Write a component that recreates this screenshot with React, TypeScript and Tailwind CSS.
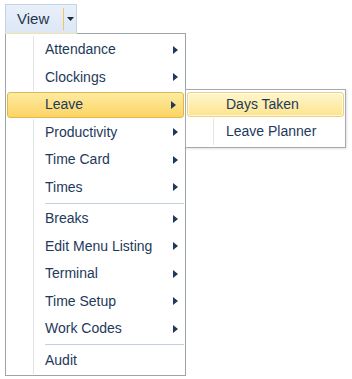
import React from 'react'

type Item = { label: string; sub?: boolean; active?: boolean; sepBefore?: boolean }

const items: Item[] = [
  { label: 'Attendance', sub: true },
  { label: 'Clockings', sub: true },
  { label: 'Leave', sub: true, active: true },
  { label: 'Productivity', sub: true },
  { label: 'Time Card', sub: true },
  { label: 'Times', sub: true },
  { label: 'Breaks', sub: true, sepBefore: true },
  { label: 'Edit Menu Listing', sub: true },
  { label: 'Terminal', sub: true },
  { label: 'Time Setup', sub: true },
  { label: 'Work Codes', sub: true },
  { label: 'Audit', sepBefore: true },
]

const Arrow = () => (
  <svg width="5" height="8" viewBox="0 0 5 8" className="shrink-0 mr-[7px]">
    <polygon points="0,0 5,4 0,8" fill="#1e395b" />
  </svg>
)

const Separator = () => (
  <div className="flex h-[4px]">
    <div className="w-[28px] shrink-0 border-r border-[#e2e3e5]" />
    <div className="flex-1 flex items-center pl-[11px] pr-[1px]">
      <div className="h-px w-full bg-[#c5d0de]" />
    </div>
  </div>
)

const MenuRow = ({ item }: { item: Item }) =>
  item.active ? (
    <div className="flex items-center h-[25.5px] m-[1px] rounded-[3px] border border-[#e0b84e] bg-linear-to-b from-[#feeba0] to-[#fcd462]">
      <div className="w-[26px] shrink-0" />
      <div className="flex-1 pl-[11px]">{item.label}</div>
      {item.sub && <Arrow />}
    </div>
  ) : (
    <div className="flex items-stretch h-[27.5px]">
      <div className="w-[28px] shrink-0 border-r border-[#e2e3e5]" />
      <div className="flex-1 flex items-center pl-[11px]">{item.label}</div>
      {item.sub && (
        <div className="flex items-center">
          <Arrow />
        </div>
      )}
    </div>
  )

const SubMenu = () => (
  <div className="absolute left-[185px] top-[89px] w-[161px] flex flex-col border border-[#a7abb0] bg-white shadow-[1px_1px_2px_rgba(0,0,0,0.12)] pt-[1px] pb-[2px]">
    <div className="flex items-center h-[25px] m-[1px] rounded-[3px] border border-[#ecd27c] bg-linear-to-b from-[#fef6cc] to-[#fde48c] shadow-[inset_0_0_0_1px_rgba(255,255,255,0.7)]">
      <div className="w-[26px] shrink-0" />
      <div className="pl-[12px]">Days Taken</div>
    </div>
    <div className="flex h-[27px]">
      <div className="w-[28px] shrink-0 border-r border-[#e3e4e6]" />
      <div className="flex items-center pl-[12px]">Leave Planner</div>
    </div>
  </div>
)

export default function App() {
  return (
    <div
      className="relative w-[352px] h-[379px] bg-white text-[14px] text-[#1e395b]"
      style={{ fontFamily: '"Liberation Sans", Arial, sans-serif' }}
    >
      <div className="pt-[4px] pl-[5px]">
        <div className="flex w-[72px] h-[29px] border border-b-0 border-[#c4d4e8] bg-linear-to-b from-[#e9f0fa] to-[#dce7f5]">
          <div className="w-[57px] flex items-center pl-[11px] pt-px text-[15px] text-[#26364e]">View</div>
          <div className="w-px my-[3px] bg-[#f2c65a]" />
          <div className="flex-1 flex items-center justify-center">
            <svg width="7" height="4" viewBox="0 0 7 4">
              <polygon points="0,0 7,0 3.5,4" fill="#1b2b40" />
            </svg>
          </div>
        </div>
        <div className="relative w-[181px] flex flex-col border border-[#9ea3a8] bg-white pt-[2px] pb-[1px]">
          <div className="absolute -left-px -top-px h-px w-[72px] bg-[#f3e3a8]" />
          {items.map((it) => (
            <React.Fragment key={it.label}>
              {it.sepBefore && <Separator />}
              <MenuRow item={it} />
            </React.Fragment>
          ))}
        </div>
      </div>
      <SubMenu />
    </div>
  )
}
